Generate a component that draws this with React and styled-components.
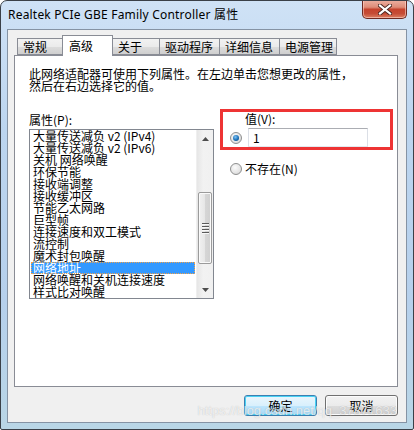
import React from "react";
import styled, { createGlobalStyle } from "styled-components";

const GlobalStyle = createGlobalStyle`
  html, body {
    margin: 0;
    padding: 0;
    background: #ffffff;
  }
  * {
    box-sizing: border-box;
  }
`;

const cjk = `"Noto Sans CJK SC", "Noto Sans", sans-serif`;

const Window = styled.div`
  position: relative;
  width: 414px;
  height: 430px;
  border: 1px solid #3a4048;
  border-radius: 7px 7px 2px 2px;
  background: linear-gradient(180deg, #cfe2f6 0%, #bcd5ef 30%, #b6d0ec 70%, #b9d6e6 100%);
  padding: 0 6px 6px 6px;
  display: flex;
  flex-direction: column;
  overflow: hidden;
`;

const TitleBar = styled.div`
  height: 29px;
  display: flex;
  justify-content: space-between;
  align-items: flex-start;
`;

const Title = styled.div`
  font-family: "Noto Sans", "Noto Sans CJK SC", sans-serif;
  font-size: 12px;
  line-height: 16px;
  color: #000;
  padding: 6px 0 0 1px;
  letter-spacing: 0.2px;
`;

const CloseButton = styled.div`
  width: 45px;
  height: 19px;
  margin-top: -1px;
  border: 1px solid #6e2a22;
  border-top: none;
  border-radius: 0 0 5px 5px;
  background: linear-gradient(180deg, #edb1a2 0%, #de8c78 40%, #c6432d 52%, #c54c36 75%, #dc7e62 100%);
  box-shadow: inset 0 0 0 1px rgba(255, 220, 210, 0.55);
  display: flex;
  align-items: center;
  justify-content: center;
`;

const Client = styled.div`
  flex: 1;
  border: 1px solid #8593a4;
  background: #f0f0f0;
  padding: 5px 8px 6px 6px;
  display: flex;
  flex-direction: column;
`;

const TabRow = styled.div`
  display: flex;
  align-items: flex-end;
  padding-left: 3px;
  height: 20px;
  position: relative;
  z-index: 1;
`;

const Tab = styled.div`
  width: ${(p) => p.$w}px;
  height: ${(p) => (p.$active ? 21 : 17)}px;
  margin-bottom: ${(p) => (p.$active ? -1 : 0)}px;
  border: 1px solid #898c95;
  border-bottom: ${(p) => (p.$active ? "none" : "1px solid #898c95")};
  border-left-width: ${(p) => (p.$first || p.$active ? 1 : 0)}px;
  border-right-width: ${(p) => (p.$beforeActive ? 0 : 1)}px;
  background: ${(p) =>
    p.$active ? "#ffffff" : "linear-gradient(180deg, #f2f2f2 0%, #ebebeb 50%, #dddddd 51%, #cfcfcf 100%)"};
  font-family: ${cjk};
  font-size: 12px;
  line-height: 14px;
  color: #000;
  padding: ${(p) => (p.$active ? "3px 0 0 6px" : "1px 0 0 5px")};
  white-space: nowrap;
`;

const Panel = styled.div`
  width: 384px;
  height: 332px;
  border: 1px solid #898c95;
  background: #ffffff;
  padding: 12px 3px 12px 14px;
  display: flex;
  flex-direction: column;
`;

const Description = styled.div`
  font-family: ${cjk};
  font-size: 12px;
  line-height: 12px;
  color: #000;
  margin-bottom: 17px;
`;

const ContentRow = styled.div`
  display: flex;
  align-items: flex-start;
  gap: 6px;
`;

const LeftColumn = styled.div`
  width: 185px;
  flex-shrink: 0;
  display: flex;
  flex-direction: column;
`;

const Label = styled.div`
  font-family: ${cjk};
  font-size: 12px;
  line-height: 14px;
  color: #000;
  white-space: nowrap;
  margin-top: ${(p) => p.$top || 0}px;
  margin-left: ${(p) => p.$left || 0}px;
`;

const ListBox = styled.div`
  margin-top: 2px;
  height: 170px;
  border: 1px solid #828790;
  background: #fff;
  display: flex;
`;

const Items = styled.div`
  flex: 1;
  padding: 0 1px;
  overflow: hidden;
`;

const Item = styled.div`
  height: 12px;
  font-family: ${cjk};
  font-size: 12px;
  line-height: 12px;
  padding-left: 2px;
  white-space: nowrap;
  color: ${(p) => (p.$selected ? "#fff" : "#000")};
  background: ${(p) => (p.$selected ? "#3399ff" : "transparent")};
  outline: ${(p) => (p.$selected ? "1px dotted #f2a24a" : "none")};
  outline-offset: -1px;
`;

const ScrollBar = styled.div`
  width: 17px;
  flex-shrink: 0;
  display: flex;
  flex-direction: column;
  background: linear-gradient(90deg, #e6e6e6 0%, #f2f2f2 40%, #f0f0f0 100%);
  border-left: 1px solid #efefef;
`;

const ArrowButton = styled.div`
  height: 17px;
  display: flex;
  align-items: center;
  justify-content: center;
`;

const Track = styled.div`
  flex: 1;
`;

const Thumb = styled.div`
  height: 72px;
  margin: 0 1px;
  border: 1px solid #9b9b9b;
  border-radius: 2px;
  background: linear-gradient(90deg, #f1f1f1 0%, #e6e6e6 50%, #d6d6d6 51%, #cfcfcf 100%);
  box-shadow: inset 0 0 0 1px #fafafa;
  display: flex;
  flex-direction: column;
  align-items: center;
  justify-content: center;
  gap: 2px;
`;

const Grip = styled.div`
  width: 7px;
  height: 1px;
  background: #5a5a5a;
  box-shadow: 0 1px 0 #f8f8f8;
`;

const RightColumn = styled.div`
  flex: 1;
  display: flex;
  flex-direction: column;
`;

const Highlight = styled.div`
  width: 173px;
  height: 41px;
  border: 3px solid #ee3434;
  display: flex;
  flex-direction: column;
`;

const ValueRow = styled.div`
  display: flex;
  align-items: center;
  margin-top: 2px;
  padding-left: 7px;
`;

const Radio = styled.div`
  width: 12px;
  height: 12px;
  border-radius: 50%;
  border: 1px solid #8e8f8f;
  background: radial-gradient(circle at 40% 35%, #fbfbfb 0%, #e4e4e4 60%, #cbcbcb 100%);
  display: flex;
  align-items: center;
  justify-content: center;
  flex-shrink: 0;
`;

const RadioDot = styled.div`
  width: 6px;
  height: 6px;
  border-radius: 50%;
  background: radial-gradient(circle at 40% 35%, #7fc3f5 0%, #1a6fb6 55%, #0d3f73 100%);
`;

const TextBox = styled.div`
  width: 120px;
  height: 19px;
  margin-left: 6px;
  border: 1px solid #dbdfe6;
  border-top-color: #abadb3;
  border-bottom-color: #e3e9ef;
  background: #fff;
  font-family: ${cjk};
  font-size: 12px;
  line-height: 17px;
  padding-left: 4px;
  color: #000;
`;

const OptionRow = styled.div`
  display: flex;
  align-items: center;
  gap: 3px;
  margin-top: 12px;
  padding-left: 10px;
`;

const ButtonRow = styled.div`
  display: flex;
  justify-content: flex-end;
  gap: 8px;
  margin-top: 8px;
`;

const Button = styled.div`
  width: 73px;
  height: 21px;
  border: 1px solid ${(p) => (p.$default ? "#3c7fb1" : "#707070")};
  border-radius: 3px;
  background: ${(p) =>
    p.$default
      ? "linear-gradient(180deg, #eaf6fd 0%, #d9f0fc 50%, #bee6fd 51%, #a7d9f5 100%)"
      : "linear-gradient(180deg, #f2f2f2 0%, #ebebeb 50%, #dddddd 51%, #cfcfcf 100%)"};
  box-shadow: ${(p) => (p.$default ? "inset 0 0 0 1px #48d2f4" : "inset 0 0 0 1px #fcfcfc")};
  font-family: ${cjk};
  font-size: 12px;
  line-height: 19px;
  text-align: center;
  color: #000;
`;

const Watermark = styled.div`
  position: absolute;
  right: 16px;
  bottom: 11px;
  font-family: "Liberation Sans", Arial, sans-serif;
  font-size: 13px;
  color: rgba(255, 255, 255, 0.72);
  text-shadow: 0 0 1px rgba(90, 90, 90, 0.35);
  pointer-events: none;
`;

const tabs = [
  { label: "常规", w: 45 },
  { label: "高级", w: 51, active: true },
  { label: "关于", w: 47 },
  { label: "驱动程序", w: 60 },
  { label: "详细信息", w: 60 },
  { label: "电源管理", w: 57 },
];

const properties = [
  "大量传送减负 v2 (IPv4)",
  "大量传送减负 v2 (IPv6)",
  "关机 网络唤醒",
  "环保节能",
  "接收端调整",
  "接收缓冲区",
  "节能乙太网路",
  "巨型帧",
  "连接速度和双工模式",
  "流控制",
  "魔术封包唤醒",
  "网络地址",
  "网络唤醒和关机连接速度",
  "样式比对唤醒",
];

const selectedIndex = 11;
const thumbOffset = 45;

const Arrow = ({ up }) => (
  <svg width="7" height="4" viewBox="0 0 7 4">
    <path d={up ? "M0 4 L3.5 0 L7 4 Z" : "M0 0 L3.5 4 L7 0 Z"} fill="#4d4d4d" />
  </svg>
);

export default function App() {
  return (
    <>
      <GlobalStyle />
      <Window>
        <TitleBar>
          <Title>Realtek PCIe GBE Family Controller 属性</Title>
          <CloseButton>
            <svg width="14" height="11" viewBox="0 0 14 11">
              <path
                d="M2 1.5 L12 9.5 M12 1.5 L2 9.5"
                stroke="#4a2620"
                strokeWidth="4"
                strokeLinecap="square"
              />
              <path
                d="M2 1.5 L12 9.5 M12 1.5 L2 9.5"
                stroke="#ffffff"
                strokeWidth="2.2"
                strokeLinecap="square"
              />
            </svg>
          </CloseButton>
        </TitleBar>
        <Client>
          <TabRow>
            {tabs.map((t, i) => (
              <Tab
                key={t.label}
                $w={t.w}
                $active={t.active}
                $first={i === 0}
                $beforeActive={tabs[i + 1] && tabs[i + 1].active}
              >
                {t.label}
              </Tab>
            ))}
          </TabRow>
          <Panel>
            <Description>
              此网络适配器可使用下列属性。在左边单击您想更改的属性，
              <br />
              然后在右边选择它的值。
            </Description>
            <ContentRow>
              <LeftColumn>
                <Label $top={4}>属性(P):</Label>
                <ListBox>
                  <Items>
                    {properties.map((p, i) => (
                      <Item key={p} $selected={i === selectedIndex}>
                        {p}
                      </Item>
                    ))}
                  </Items>
                  <ScrollBar>
                    <ArrowButton>
                      <Arrow up />
                    </ArrowButton>
                    <Track>
                      <Thumb style={{ marginTop: thumbOffset }}>
                        <Grip />
                        <Grip />
                        <Grip />
                        <Grip />
                      </Thumb>
                    </Track>
                    <ArrowButton>
                      <Arrow />
                    </ArrowButton>
                  </ScrollBar>
                </ListBox>
              </LeftColumn>
              <RightColumn>
                <Highlight>
                  <Label $left={22}>值(V):</Label>
                  <ValueRow>
                    <Radio>
                      <RadioDot />
                    </Radio>
                    <TextBox>1</TextBox>
                  </ValueRow>
                </Highlight>
                <OptionRow>
                  <Radio />
                  <Label>不存在(N)</Label>
                </OptionRow>
              </RightColumn>
            </ContentRow>
          </Panel>
          <ButtonRow>
            <Button $default>确定</Button>
            <Button>取消</Button>
          </ButtonRow>
        </Client>
        <Watermark>https://blog.csdn.net/qq_37871633</Watermark>
      </Window>
    </>
  );
}
